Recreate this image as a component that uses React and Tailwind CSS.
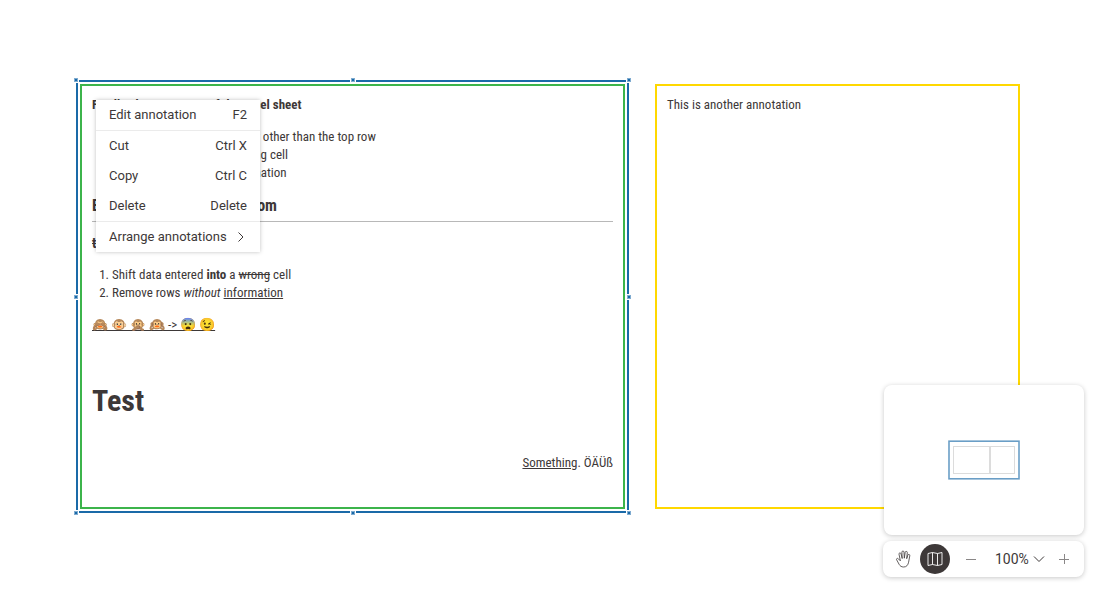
const HANDLES = [
  'left-0 top-0',
  'left-1/2 top-0',
  'left-full top-0',
  'left-0 top-1/2',
  'left-full top-1/2',
  'left-0 top-full',
  'left-1/2 top-full',
  'left-full top-full',
];

const MENU = [
  [{ label: 'Edit annotation', hint: 'F2' }],
  [
    { label: 'Cut', hint: 'Ctrl X' },
    { label: 'Copy', hint: 'Ctrl C' },
    { label: 'Delete', hint: 'Delete' },
  ],
  [{ label: 'Arrange annotations', submenu: true }],
];

function SelectionFrame() {
  return (
    <div className="pointer-events-none absolute -inset-1.5 border-2 border-[#1a6aa8]">
      <div className="absolute -inset-0.5">
        {HANDLES.map((place) => (
          <span
            key={place}
            className={`absolute flex size-1.5 -translate-x-1/2 -translate-y-1/2 items-center justify-center bg-white ${place}`}
          >
            <span className="size-1 border border-[#7fabd0] bg-[#1a6aa8]" />
          </span>
        ))}
      </div>
    </div>
  );
}

function SelectedAnnotation() {
  return (
    <article className="absolute top-[84px] left-20 h-[425px] w-[545px] border-2 border-[#3cb44b] px-2.5 py-2.5 text-[13px] leading-[18px]">
      <SelectionFrame />
      <p className="font-bold">Feedback on contents of the Excel sheet</p>
      <ul className="mt-3.5 list-disc pl-5">
        <li>Contain header cells in a row other than the top row</li>
        <li>Data was entered in the wrong cell</li>
        <li>Rows without any real information</li>
      </ul>
      <h3 className="mt-3.5 border-b border-[#b8b8b8] pb-[5px] text-base leading-5 font-bold">
        Empty rows placed at bottom
      </h3>
      <p className="mt-3 text-sm leading-[18px] font-bold">
        <s>to be removed</s>
      </p>
      <ol className="mt-3.5 list-decimal pl-5">
        <li>
          Shift data entered <b>into</b> a <s>wrong</s> cell
        </li>
        <li>
          Remove rows <i>without</i> <u>information</u>
        </li>
      </ol>
      <p className="mt-3.5">
        <u>🙈 🐵 🙊 🙉 -&gt; 😨 😉</u>
      </p>
      <h1 className="mt-12 text-[30px] leading-[38px] font-bold">Test</h1>
      <p className="mt-[34px] text-right">
        <u>Something</u>. ÖÄÜß
      </p>
    </article>
  );
}

function ContextMenu() {
  return (
    <div
      role="menu"
      className="absolute top-[100px] left-24 w-[164px] divide-y divide-[#ebebeb] bg-white font-['Roboto',sans-serif] text-[13px] shadow-[0_0_4px_rgba(0,0,0,0.25)]"
    >
      {MENU.map((group) => (
        <div key={group[0].label} role="group">
          {group.map((item) => (
            <button
              key={item.label}
              type="button"
              role="menuitem"
              className="flex h-[30px] w-full items-center justify-between px-[13px]"
            >
              <span>{item.label}</span>
              {item.submenu ? (
                <svg width="12" height="12" viewBox="0 0 12 12" fill="none" stroke="currentColor" aria-hidden="true">
                  <path d="M3.5 1.500 8 6l-4.500 4.500" />
                </svg>
              ) : (
                <span>{item.hint}</span>
              )}
            </button>
          ))}
        </div>
      ))}
    </div>
  );
}

function MiniMap() {
  return (
    <div className="h-[150px] w-[200px] rounded-lg bg-white shadow-[0_1px_5px_rgba(0,0,0,0.22)]">
      <svg viewBox="0 0 200 150" fill="none" className="size-full" role="img" aria-label="Overview map">
        <rect x="69.5" y="61.5" width="36" height="27" stroke="#dcdcdc" />
        <rect x="106.5" y="61.5" width="24" height="27" stroke="#dcdcdc" />
        <rect x="65" y="56.2" width="70" height="37.6" stroke="#1a6aa8" strokeOpacity="0.65" strokeWidth="1.6" />
      </svg>
    </div>
  );
}

function Toolbar() {
  return (
    <div
      role="toolbar"
      aria-label="View"
      className="flex h-9 w-[201px] items-center rounded-lg bg-white px-[5px] shadow-[0_1px_5px_rgba(0,0,0,0.22)]"
    >
      <button type="button" aria-label="Pan" className="grid size-[30px] place-items-center">
        <svg width="18" height="18" viewBox="0 0 18 18" fill="none" stroke="currentColor" strokeWidth="0.8" strokeLinecap="round" strokeLinejoin="round" aria-hidden="true">
          <path d="M6.300 10.500 5 4.200a1 1 0 0 1 2-.5l1.200 4.800-.3-6.400a1.050 1.050 0 0 1 2.100 0l.3 6.100.9-5.800a1.050 1.050 0 0 1 2.100.2l-.6 6.100 1.100-3.500a1 1 0 0 1 2 .5l-1.200 6.500c-.6 3-2.200 4.800-4.900 4.800-2.400 0-3.600-1-4.600-2.700L2.600 9.700c-.5-1 .8-1.900 1.600-1.100z" />
        </svg>
      </button>
      <button
        type="button"
        aria-label="Toggle map"
        aria-pressed="true"
        className="ml-0.5 grid size-[30px] place-items-center rounded-full bg-[#3d3838] text-white"
      >
        <svg width="18" height="18" viewBox="0 0 18 18" fill="none" stroke="currentColor" strokeWidth="0.9" strokeLinejoin="round" aria-hidden="true">
          <path d="M2 3.500 6.500 2.500l5 1L16 2.500v12l-4.500 1-5-1-4.500 1zM6.500 2.500v12M11.500 3.500v12" />
        </svg>
      </button>
      <button type="button" aria-label="Zoom out" className="ml-1.5 grid size-[30px] place-items-center text-[#8a8787]">
        <svg width="10" height="10" viewBox="0 0 10 10" stroke="currentColor" aria-hidden="true">
          <path d="M0 5.500h10" />
        </svg>
      </button>
      <button type="button" className="ml-[9px] flex h-[30px] items-center gap-1 font-['Roboto',sans-serif] text-sm">
        100%
        <svg width="12" height="12" viewBox="0 0 12 12" fill="none" stroke="currentColor" aria-hidden="true">
          <path d="M1 3.500 6 8.500l5-5" />
        </svg>
      </button>
      <button type="button" aria-label="Zoom in" className="ml-auto grid size-[30px] place-items-center text-[#8a8787]">
        <svg width="10" height="10" viewBox="0 0 10 10" stroke="currentColor" aria-hidden="true">
          <path d="M0 5.500h10M5.500 0v10" />
        </svg>
      </button>
    </div>
  );
}

export default function App() {
  return (
    <main className="relative min-h-screen overflow-hidden bg-white font-['Roboto_Condensed','Roboto',sans-serif] text-[#3d3838]">
      <SelectedAnnotation />
      <article className="absolute top-[84px] left-[655px] h-[425px] w-[365px] border-2 border-[#ffd800] p-2.5 text-[13px] leading-[18px]">
        <p>This is another annotation</p>
      </article>
      <ContextMenu />
      <aside className="absolute right-4 bottom-4 flex flex-col items-end gap-1.5">
        <MiniMap />
        <Toolbar />
      </aside>
    </main>
  );
}
